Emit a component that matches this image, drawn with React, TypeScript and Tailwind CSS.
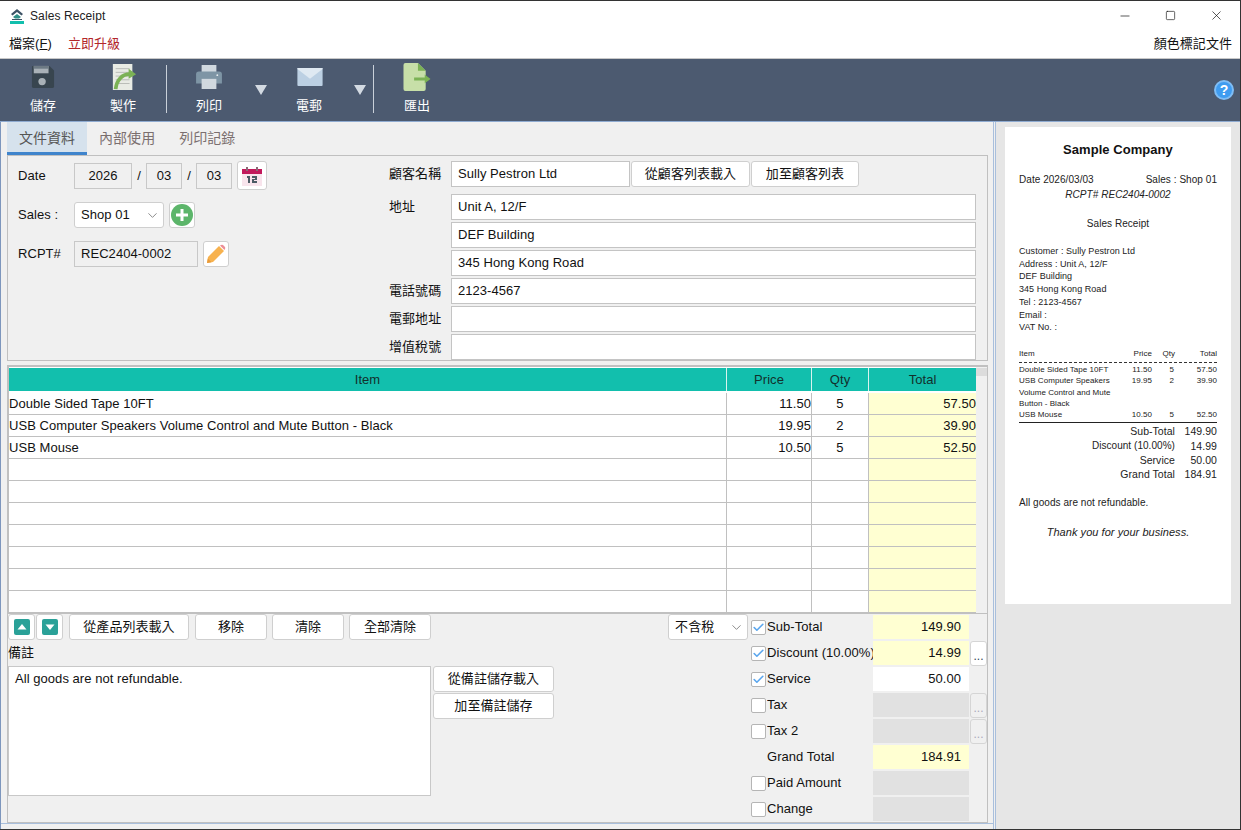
import { Minus, Square, X, ChevronDown, Check } from "lucide-react";
import type { ReactNode } from "react";

const rows = [
  ["Double Sided Tape 10FT", "11.50", "5", "57.50"],
  ["USB Computer Speakers Volume Control and Mute Button - Black", "19.95", "2", "39.90"],
  ["USB Mouse", "10.50", "5", "52.50"],
  ["", "", "", ""],
  ["", "", "", ""],
  ["", "", "", ""],
  ["", "", "", ""],
  ["", "", "", ""],
  ["", "", "", ""],
  ["", "", "", ""],
];

const totals = [
  { label: "Sub-Total", value: "149.90", box: "bg-[#ffffd2]", check: true },
  { label: "Discount (10.00%)", value: "14.99", box: "bg-[#ffffd2]", check: true, more: true },
  { label: "Service", value: "50.00", box: "bg-white", check: true },
  { label: "Tax", value: "", box: "bg-[#e1e1e1]", check: false, more: true, off: true },
  { label: "Tax 2", value: "", box: "bg-[#e1e1e1]", check: false, more: true, off: true },
  { label: "Grand Total", value: "184.91", box: "bg-[#ffffd2]", noCheck: true },
  { label: "Paid Amount", value: "", box: "bg-[#e1e1e1]", check: false },
  { label: "Change", value: "", box: "bg-[#e1e1e1]", check: false },
];

function Tool({ label, width, children }: { label: string; width: string; children: ReactNode }) {
  return (
    <div className={`flex h-full flex-col items-center ${width}`}>
      <div className="flex h-[29px] items-end justify-center">{children}</div>
      <span className="mt-[6px] text-[13px] leading-[18px] text-white">{label}</span>
    </div>
  );
}

function Caret({ className }: { className: string }) {
  return (
    <svg width="14" height="12" viewBox="0 0 14 12" className={`mt-[22px] ${className}`}>
      <path d="M1 1h12L7 11z" fill="#d3dae2" />
    </svg>
  );
}

function Sep({ className }: { className: string }) {
  return <div className={`mt-[3px] h-[48px] w-px bg-[#c9d0d9] ${className}`} />;
}

function Btn({ className, children }: { className: string; children: ReactNode }) {
  return (
    <button className={`flex items-center justify-center rounded-[3px] border border-[#cfcfcf] bg-white text-[13px] text-[#111] ${className}`}>
      {children}
    </button>
  );
}

function Field({ value, className }: { value?: string; className: string }) {
  return (
    <div className={`flex h-[26px] items-center border border-[#c4c4c4] bg-white px-[6px] text-[13px] text-[#111] ${className}`}>
      {value}
    </div>
  );
}

function Select({ value, className }: { value: string; className: string }) {
  return (
    <div className={`flex h-[26px] items-center justify-between rounded-[3px] border border-[#cfcfcf] bg-white pl-[6px] pr-[3px] text-[13px] text-[#111] ${className}`}>
      {value}
      <ChevronDown size={15} strokeWidth={1.2} className="text-[#666]" />
    </div>
  );
}

function Label({ children, className = "" }: { children: ReactNode; className?: string }) {
  return <span className={`text-[13px] text-[#111] ${className}`}>{children}</span>;
}

export default function App() {
  return (
    <div
      className="flex h-[830px] w-[1241px] flex-col overflow-hidden border-t border-r border-b border-[#333] bg-[#f0f0f0] tracking-[0.05px]"
      style={{ fontFamily: '"Liberation Sans", "Noto Sans CJK TC", sans-serif' }}
    >
      {/* title bar */}
      <div className="flex h-[29px] items-center bg-white">
        <svg width="16" height="16" viewBox="0 0 16 16" className="ml-[9px]">
          <path d="M8 1 14 6 12.500 7.500 8 4 3.500 7.500 2 6z" fill="#3d5366" />
          <path d="M4 9l4-3 4 3-2 1.500H6z" fill="#2f8f87" />
          <path d="M3 11h10v1H3z" fill="#3d5366" />
          <path d="M1 13h14v3H1z" fill="#12bfad" />
        </svg>
        <span className="ml-[5px] text-[12px] tracking-[0.1px] text-[#222]">Sales Receipt</span>
        <div className="ml-auto flex items-center text-[#111]">
          <Minus size={14} strokeWidth={1.2} className="mr-[33px]" />
          <Square size={11} strokeWidth={1.4} className="mr-[33px]" />
          <X size={15} strokeWidth={1.1} className="mr-[16px]" />
        </div>
      </div>

      {/* menu */}
      <div className="flex h-[28px] items-center bg-white pl-[9px] pr-[8px] text-[13px]">
        <span className="text-[#111]">檔案(<u>F</u>)</span>
        <span className="ml-[16px] text-[#b3262a]">立即升級</span>
        <span className="ml-auto text-[#111]">顏色標記文件</span>
      </div>

      {/* toolbar */}
      <div className="flex h-[64px] items-start border-t border-b border-t-[#c8c8c8] border-b-[#8fabd1] bg-[#4c5a70] pt-[3px]">
        <Tool label="儲存" width="ml-[3px] w-[80px]">
          <svg width="24" height="24" viewBox="0 0 26 26" className="mb-[2px]">
            <path d="M2 1h18l5 5v17a2 2 0 0 1-2 2H3a2 2 0 0 1-2-2V2a1 1 0 0 1 1-1z" fill="#38454f" />
            <path d="M3 1h16v8H3z" fill="#a9b1b7" />
            <path d="M3 1h16v3H3z" fill="#6d7a84" />
            <circle cx="12" cy="18" r="4" fill="#a9b1b7" />
          </svg>
        </Tool>
        <Tool label="製作" width="w-[80px]">
          <svg width="26" height="28" viewBox="0 0 28 30" className="ml-[2px]">
            <path d="M2 1h21v28H2z" fill="#e8ebe4" />
            <path d="M5 6h15M5 10h15M5 14h15M5 18h15M5 22h15" stroke="#b6b9b4" strokeWidth="1" />
            <path d="M5 28c1-10 7-16 15-16" stroke="#7bb255" strokeWidth="4" fill="none" />
            <path d="M19 6l8 6-8 5z" fill="#7bb255" />
          </svg>
        </Tool>
        <Sep className="ml-[3px]" />
        <Tool label="列印" width="w-[84px]">
          <svg width="26" height="24" viewBox="0 0 28 26" className="mb-[2px]">
            <path d="M6 0h16v8H6z" fill="#d0d8df" />
            <path d="M3 7h22a3 3 0 0 1 3 3v10h-28V10a3 3 0 0 1 3-3z" fill="#7e95a5" />
            <path d="M6 15h16v11H6z" fill="#d0d8df" />
            <circle cx="23" cy="11" r="1" fill="#e8edf0" />
          </svg>
        </Tool>
        <Caret className="ml-[3px]" />
        <Tool label="電郵" width="w-[82px]">
          <svg width="28" height="18" viewBox="0 0 28 20" className="mb-[5px] ml-[1px]">
            <path d="M1 0h26a1 1 0 0 1 1 1v18a1 1 0 0 1-1 1H1a1 1 0 0 1-1-1V1a1 1 0 0 1 1-1z" fill="#bcd0e3" />
            <path d="M0 1l14 11L28 1V0H0z" fill="#dfe9f2" />
          </svg>
        </Tool>
        <Caret className="ml-[3px]" />
        <Sep className="ml-[6px]" />
        <Tool label="匯出" width="ml-[3px] w-[80px]">
          <svg width="28" height="28" viewBox="0 0 28 29">
            <path d="M2 0h13l8 8v19a2 2 0 0 1-2 2H2a2 2 0 0 1-2-2V2a2 2 0 0 1 2-2z" fill="#c7dfa8" />
            <path d="M15 0l8 8h-8z" fill="#7bb255" />
            <path d="M11 15h11v-3l6 4.500-6 4.500v-3H11z" fill="#7bb255" />
          </svg>
        </Tool>
        <div className="ml-auto mr-[6px] mt-[18px] flex h-[20px] w-[20px] items-center justify-center rounded-full border-2 border-[#7fbdf5] bg-[#3f9cf0] text-[14px] font-bold leading-none text-white">
          ?
        </div>
      </div>

      {/* body */}
      <div className="flex min-h-0 flex-1">
        <div className="w-[993px] border-l border-[#7d96bd] pl-[6px]">
          {/* tabs */}
          <div className="flex h-[33px] items-stretch text-[14px]">
            <div className="flex w-[80px] items-center justify-center border-b-[3px] border-[#3f84cc] bg-[#d6e2ed] pt-[3px] text-[#555]">文件資料</div>
            <div className="flex items-center px-[12px] text-[#7b6f6f]">內部使用</div>
            <div className="flex items-center px-[12px] text-[#7b6f6f]">列印記錄</div>
          </div>

          {/* document group */}
          <div className="flex h-[206px] w-[981px] border border-[#c0c0c0]">
            <div className="w-[381px] pl-[10px] pt-[5px]">
              <div className="flex h-[29px] items-center">
                <Label className="w-[56px]">Date</Label>
                <div className="flex h-[26px] w-[58px] items-center justify-center border border-[#c8c8c8] text-[13px] text-[#111]">2026</div>
                <span className="w-[14px] text-center text-[13px] text-[#111]">/</span>
                <div className="flex h-[26px] w-[36px] items-center justify-center border border-[#c8c8c8] text-[13px] text-[#111]">03</div>
                <span className="w-[14px] text-center text-[13px] text-[#111]">/</span>
                <div className="flex h-[26px] w-[36px] items-center justify-center border border-[#c8c8c8] text-[13px] text-[#111]">03</div>
                <Btn className="ml-[5px] h-[29px] w-[30px]">
                  <svg width="20" height="20" viewBox="0 0 20 20">
                    <path d="M0 5h20v15H0z" fill="#f8e4ec" />
                    <path d="M0 3h20v5H0z" fill="#c2185b" />
                    <path d="M4 1h2v4H4zM14 1h2v4h-2z" fill="#8a6a76" />
                    <path d="M5 10h3v7H6v-5H5zM10 10h5v4h-3v1h3v2h-5v-4h3v-1h-3z" fill="#4b5a64" />
                  </svg>
                </Btn>
              </div>
              <div className="mt-[12px] flex h-[26px] items-center">
                <Label className="w-[56px]">Sales :</Label>
                <Select value="Shop 01" className="w-[90px]" />
                <Btn className="ml-[5px] h-[26px] w-[26px]">
                  <svg width="22" height="22" viewBox="0 0 22 22">
                    <circle cx="11" cy="11" r="11" fill="#5cb56a" />
                    <path d="M9.500 5h3v4.500H17v3h-4.500V17h-3v-4.500H5v-3h4.500z" fill="#fff" />
                  </svg>
                </Btn>
              </div>
              <div className="mt-[13px] flex h-[26px] items-center">
                <Label className="w-[56px]">RCPT#</Label>
                <div className="flex h-[26px] w-[124px] items-center border border-[#c8c8c8] px-[6px] text-[13px] text-[#111]">REC2404-0002</div>
                <Btn className="ml-[5px] h-[26px] w-[26px]">
                  <svg width="20" height="20" viewBox="0 0 20 20">
                    <path d="M1 19l1-6L13 2l5 5L7 18z" fill="#f7b24f" />
                    <path d="M14 1.500l1-.5a2 2 0 0 1 2 0l2 2a2 2 0 0 1 0 2l-.5 1z" fill="#ec8f97" />
                    <path d="M1 19l.8-4.500 3.700 3.700z" fill="#e89a3a" />
                  </svg>
                </Btn>
              </div>
            </div>
            <div className="flex-1 pt-[5px]">
              <div className="flex h-[26px] items-center">
                <Label className="w-[62px]">顧客名稱</Label>
                <Field value="Sully Pestron Ltd" className="w-[179px]" />
                <Btn className="ml-px h-[26px] w-[119px]">從顧客列表載入</Btn>
                <Btn className="ml-px h-[26px] w-[108px]">加至顧客列表</Btn>
              </div>
              <div className="mt-[7px] flex flex-col gap-[2px]">
                {[
                  ["地址", "Unit A, 12/F"],
                  ["", "DEF Building"],
                  ["", "345 Hong Kong Road"],
                  ["電話號碼", "2123-4567"],
                  ["電郵地址", ""],
                  ["增值稅號", ""],
                ].map(([label, value], i) => (
                  <div key={i} className="flex h-[26px] items-center">
                    <Label className="w-[62px]">{label}</Label>
                    <Field value={value} className="w-[525px]" />
                  </div>
                ))}
              </div>
            </div>
          </div>

          {/* items grid */}
          <div className="mt-[4px] flex h-[248px] w-[981px] overflow-hidden border-t-2 border-l-2 border-r border-[#c0c0c0] bg-white">
            <div className="flex w-[967px] shrink-0 flex-col">
              <div className="mb-[2px] mt-[1px] grid h-[23px] shrink-0 grid-cols-[718px_85px_57px_107px] bg-[#12bfad] text-[13px] text-[#12302c]">
                <div className="flex items-center justify-center border-r border-[#d9f3ef]">Item</div>
                <div className="flex items-center justify-center border-r border-[#d9f3ef]">Price</div>
                <div className="flex items-center justify-center border-r border-[#d9f3ef]">Qty</div>
                <div className="flex items-center justify-center">Total</div>
              </div>
              {rows.map((r, i) => (
                <div key={i} className="grid h-[22px] shrink-0 grid-cols-[718px_85px_57px_107px] border-b border-[#c0c0c0] text-[13px] text-[#111]">
                  <div className="flex items-center overflow-hidden whitespace-nowrap border-r border-[#c0c0c0]">{r[0]}</div>
                  <div className="flex items-center justify-end border-r border-[#c0c0c0]">{r[1]}</div>
                  <div className="flex items-center justify-center border-r border-[#c0c0c0]">{r[2]}</div>
                  <div className="flex items-center justify-end bg-[#ffffd2]">{r[3]}</div>
                </div>
              ))}
            </div>
            <div className="flex-1 bg-[#f0f0f0]">
              <div className="mt-[1px] h-[8px] bg-[#dcdcdc]" />
            </div>
          </div>

          {/* bottom */}
          <div className="flex h-[210px] w-[981px] border-x border-b border-t border-[#c0c0c0]">
            <div className="w-[661px]">
              <div className="flex items-center">
                <Btn className="h-[26px] w-[27px]">
                  <svg width="16" height="16" viewBox="0 0 16 16">
                    <rect width="16" height="16" rx="2" fill="#2aa198" />
                    <path d="M3.500 10.500 8 5l4.500 5.500z" fill="#fff" />
                  </svg>
                </Btn>
                <Btn className="ml-px h-[26px] w-[27px]">
                  <svg width="16" height="16" viewBox="0 0 16 16">
                    <rect width="16" height="16" rx="2" fill="#2aa198" />
                    <path d="M3.500 5.500 8 11l4.500-5.500z" fill="#fff" />
                  </svg>
                </Btn>
                <Btn className="ml-[6px] h-[26px] w-[120px]">從產品列表載入</Btn>
                <Btn className="ml-[6px] h-[26px] w-[72px]">移除</Btn>
                <Btn className="ml-[5px] h-[26px] w-[72px]">清除</Btn>
                <Btn className="ml-[5px] h-[26px] w-[82px]">全部清除</Btn>
              </div>
              <div className="mt-[2px] h-[24px] text-[13px] leading-[22px] text-[#111]">備註</div>
              <div className="flex">
                <div className="h-[130px] w-[423px] border border-[#c8c8c8] bg-white px-[6px] pt-[2px] text-[13px] text-[#111]">All goods are not refundable.</div>
                <div className="ml-[2px] flex flex-col gap-px">
                  <Btn className="h-[26px] w-[121px]">從備註儲存載入</Btn>
                  <Btn className="h-[26px] w-[121px]">加至備註儲存</Btn>
                </div>
              </div>
            </div>
            <Select value="不含稅" className="w-[80px]" />
            <div className="ml-[3px] flex flex-col gap-[2px] pt-px">
              {totals.map((t) => (
                <div key={t.label} className="flex h-[24px] items-center">
                  <div className="w-[16px]">
                    {!t.noCheck && (
                      <div className="flex h-[15px] w-[15px] items-center justify-center rounded-[2px] border border-[#b5b5b5] bg-white">
                        {t.check && <Check size={13} strokeWidth={3} className="text-[#5aa6ee]" />}
                      </div>
                    )}
                  </div>
                  <div className="w-[106px] overflow-hidden whitespace-nowrap text-[13px] text-[#111]">{t.label}</div>
                  <div className={`flex h-[24px] w-[96px] items-center justify-end pr-[8px] text-[13px] text-[#111] ${t.box}`}>{t.value}</div>
                  {t.more && (
                    <div className={`ml-px flex h-[25px] w-[17px] items-end justify-center rounded-[3px] border border-[#d5d5d5] pb-[3px] text-[12px] leading-[12px] ${t.off ? "bg-[#f0f0f0] text-[#aab]" : "bg-white text-[#345]"}`}>
                      ...
                    </div>
                  )}
                </div>
              ))}
            </div>
          </div>
          <div className="-ml-[6px] h-px bg-[#a9bfdc]" />
        </div>

        {/* splitter */}
        <div className="w-[3px] border-x border-[#a9bfdc]" />

        {/* preview */}
        <div className="flex-1 bg-[#e6e6e6] pl-[9px] pt-[5px]">
          <div className="h-[477px] w-[226px] bg-white px-[14px] pt-[15px] text-[#222]">
            <div className="text-center text-[13px] font-bold leading-[16px] text-[#111]">Sample Company</div>
            <div className="mt-[15px] flex justify-between text-[10px] leading-[14px]">
              <span>Date 2026/03/03</span>
              <span>Sales : Shop 01</span>
            </div>
            <div className="text-center text-[10px] italic leading-[15px]">RCPT# REC2404-0002</div>
            <div className="mt-[14px] text-center text-[10px] leading-[15px]">Sales Receipt</div>
            <div className="mt-[14px] text-[9px] leading-[12.700px]">
              <div>Customer : Sully Pestron Ltd</div>
              <div>Address : Unit A, 12/F</div>
              <div>DEF Building</div>
              <div>345 Hong Kong Road</div>
              <div>Tel : 2123-4567</div>
              <div>Email :</div>
              <div>VAT No. :</div>
            </div>
            <div className="mt-[14px] grid grid-cols-[96px_37px_23px_42px] border-b border-dashed border-[#333] pb-[3px] text-[8px] leading-[11px]">
              <span>Item</span>
              <span className="text-right">Price</span>
              <span className="text-right">Qty</span>
              <span className="text-right">Total</span>
            </div>
            <div className="border-b border-[#222] pb-[2px] pt-[1px] text-[8px] leading-[11.300px]">
              {[
                ["Double Sided Tape 10FT", "11.50", "5", "57.50"],
                ["USB Computer Speakers Volume Control and Mute Button - Black", "19.95", "2", "39.90"],
                ["USB Mouse", "10.50", "5", "52.50"],
              ].map((r) => (
                <div key={r[0]} className="grid grid-cols-[96px_37px_23px_42px]">
                  <span className="w-[94px]">{r[0]}</span>
                  <span className="text-right">{r[1]}</span>
                  <span className="pr-[1px] text-right">{r[2]}</span>
                  <span className="text-right">{r[3]}</span>
                </div>
              ))}
            </div>
            <div className="mt-[1px] text-[10.500px] leading-[14px]">
              <div className="flex justify-end">
                <span>Sub-Total</span>
                <span className="w-[42px] text-right">149.90</span>
              </div>
              <div className="mt-[1px] flex justify-end">
                <span className="text-[10px]">Discount (10.00%)</span>
                <span className="w-[42px] text-right">14.99</span>
              </div>
              <div className="flex justify-end">
                <span>Service</span>
                <span className="w-[42px] text-right">50.00</span>
              </div>
              <div className="flex justify-end">
                <span>Grand Total</span>
                <span className="w-[42px] text-right">184.91</span>
              </div>
            </div>
            <div className="mt-[15px] text-[10px] leading-[14px]">All goods are not refundable.</div>
            <div className="mt-[15px] text-center text-[11px] italic leading-[14px]">Thank you for your business.</div>
          </div>
        </div>
      </div>
    </div>
  );
}
